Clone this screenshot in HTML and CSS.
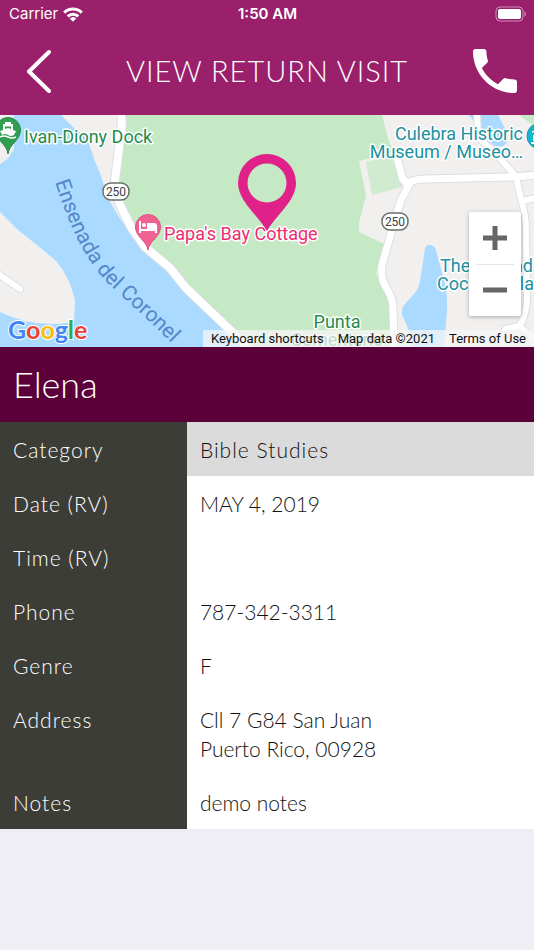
FILE: index.html
```html
<!DOCTYPE html>
<html lang="en">
<head>
<meta charset="utf-8">
<meta name="viewport" content="width=device-width, initial-scale=1">
<title>View Return Visit</title>
<link rel="stylesheet" href="styles.css">
</head>
<body>
<header class="top">
  <div class="status">
    <div class="carrier">
      <span>Carrier</span>
      <svg class="wifi" viewBox="0 0 20 15" aria-hidden="true">
        <g fill="none" stroke="#fff" stroke-width="3">
          <path d="M1.2 5.6a12.6 12.6 0 0 1 17.6 0"/>
          <path d="M4.7 9.3a7.6 7.6 0 0 1 10.6 0"/>
        </g>
        <path d="M10 14.8 6.7 11.6a4.8 4.8 0 0 1 6.6 0z" fill="#fff"/>
      </svg>
    </div>
    <time class="clock">1:50 AM</time>
    <div class="power">
      <svg class="battery" viewBox="0 0 32 16" aria-hidden="true">
        <rect x="2" y="1" width="27" height="14" rx="4" fill="none" stroke="#fff" stroke-opacity=".5"/>
        <rect x="4" y="3" width="23" height="10" rx="2" fill="#fff"/>
        <path d="M30.5 5.500v5q1.500-.6 1.500-2.500t-1.500-2.500z" fill="#fff" fill-opacity=".5"/>
      </svg>
    </div>
  </div>
  <nav class="bar">
    <button class="icon-button" type="button" aria-label="Back">
      <svg class="back-icon" viewBox="0 0 28 44" aria-hidden="true"><path d="M24 3 4 22.500 24 42" fill="none" stroke="#fff" stroke-width="4" stroke-linecap="round" stroke-linejoin="round"/></svg>
    </button>
    <h1 class="title">VIEW RETURN VISIT</h1>
    <button class="icon-button" type="button" aria-label="Call">
      <svg class="phone-icon" viewBox="3 3 18 18" aria-hidden="true"><path fill="#fff" d="M6.620 10.790c1.440 2.830 3.760 5.140 6.590 6.590l2.200-2.200c.27-.27.67-.36 1.020-.24 1.120.37 2.330.57 3.570.57.55 0 1 .45 1 1V20c0 .55-.45 1-1 1C10.610 21 3 13.390 3 4c0-.55.45-1 1-1h3.500c.55 0 1 .45 1 1 0 1.250.2 2.450.57 3.570.11.35.03.74-.25 1.020z"/></svg>
    </button>
  </nav>
</header>

<main>
  <section class="map" aria-label="Map">
    <svg class="map-canvas" viewBox="0 0 534 232" preserveAspectRatio="xMidYMid slice">
      <rect width="534" height="232" fill="#f1f0ef"/>
      <path fill="#aadaff" d="M0 0H61L75 14Q87 21 89 29Q94 45 101 61L109 85 119 102 140 132 170 157 205 194 247 232H0V197Q35 214 74 207L75 185Q70 163 57 147Q45 136 18 115L0 97V49L8 43 14 34V0Z"/>
      <path fill="#f1f0ef" d="M0 0H6L14 34 8 43 0 49Z"/>
      <path fill="#c5e8c5" d="M124 0H382L389 27 396 40 402 72 372 80 359 112V117L384 127 376 158 390 188V232H246L205 190 170 150 143 126 126 100 118 75Z"/>
      <path fill="#f1f0ef" d="M359 46 393 38 397 44 367 51 373 79 401 71 407 68 399 98 386 130 359 117V108L366 80Z"/>
      <path fill="#d0ebcf" d="M366 47 396 40 402 72 372 80Z"/>
      <path fill="#c5e8c5" d="M519 0H534V11Z"/>
      <path fill="#aadaff" d="M469 0H498L507 17Q509 29 503 31Q497 33 493 30L482 17Z"/>
      <path fill="#aadaff" d="M425 134Q426 129 430 130Q434 130 436 135L442 158Q448 175 447 195L444 232H412Q409 212 402 200Q401 194 404 190L414 179Q419 173 420 166Z"/>
      <g fill="none" stroke-linejoin="round">
        <g stroke="#dcdee3">
          <path stroke-width="10" d="M121 0Q123 9 120 25L115 65Q115 80 121 92L131 112 145 132 170 153 186 173 208 194 248 232"/>
          <path stroke-width="9" d="M396 38 402 62Q403 67 410 68L401 85 397 98 391 118 382 150Q380 164 387 174Q393 184 393 193L394 232M404 71Q412 64 424 64L514 62 536 60"/>
          <path stroke-width="8" d="M477 0 478 22 500 43 516 62 521 84Q527 102 526 125L527 185Q525 205 519 211L505 214M519 211 536 225M522 86 536 83M-2 159 20 174" stroke-linecap="round"/>
        </g>
        <g stroke="#fff">
          <path stroke-width="8" d="M121 0Q123 9 120 25L115 65Q115 80 121 92L131 112 145 132 170 153 186 173 208 194 248 232"/>
          <path stroke-width="7" d="M396 38 402 62Q403 67 410 68L401 85 397 98 391 118 382 150Q380 164 387 174Q393 184 393 193L394 232M404 71Q412 64 424 64L514 62 536 60"/>
          <path stroke-width="6" d="M477 0 478 22 500 43 516 62 521 84Q527 102 526 125L527 185Q525 205 519 211L505 214M519 211 536 225M522 86 536 83M-2 159 20 174" stroke-linecap="round"/>
        </g>
      </g>

      <g class="shield">
        <rect x="103" y="68" width="26" height="17" rx="8"/>
        <text x="116" y="81">250</text>
        <rect x="382" y="98" width="26" height="17" rx="8"/>
        <text x="395" y="111">250</text>
      </g>

      <path id="bay-line" fill="none" d="M55 67C68 105 82 145 115 175S157 213 184 241"/>
      <text class="bay"><textPath href="#bay-line">Ensenada del Coronel</textPath></text>

      <g transform="translate(8 15)">
        <path fill="#2f9e50" stroke="#258a43" d="M0 24C-1 14-12 11-12.500 0A12.500 12.500 0 0 1 12.500 0C12 11 1 14 0 24Z"/>
        <path fill="#fff" d="M-3-8H3V-6H5V0L8 1 6 5Q3 7 0 5Q-3 3-6 5L-8 1-5 0V-6H-3Z"/>
        <path fill="#2f9e50" d="M-3-3.500H3V-1L0-2-3-1Z"/>
        <path fill="none" stroke="#fff" stroke-width="1.500" d="M-8 7Q-4 5 0 7T8 7"/>
      </g>
      <g transform="translate(148 112)">
        <path fill="#f06292" stroke="#e24f82" d="M0 23C-1 14-12.500 10-12.500 0A12.500 12.500 0 0 1 12.500 0C12.500 10 1 14 0 23Z"/>
        <path fill="none" stroke="#fff" stroke-width="2" d="M-8-6V6M-8 3H8M8 6V-1"/>
        <circle cx="-4" cy="-2" r="2" fill="#fff"/>
        <path fill="#fff" d="M-1-4H6Q9-4 9-1V2H-1Z"/>
      </g>
      <g transform="translate(540 21)">
        <circle r="13" fill="#12b5cb" stroke="#0f9caf"/>
        <path fill="#fff" d="M-8-3 0-8V-5H-8ZM-7-1H-5V5H-7ZM-9 6H0V8H-9Z"/>
      </g>

      <g class="place">
        <text class="green" x="24" y="28">Ivan-Diony Dock</text>
        <text class="pink" x="164" y="125">Papa's Bay Cottage</text>
        <g class="teal">
          <text class="end" x="523" y="25">Culebra Historic</text>
          <text class="end" x="523" y="43">Museum / Museo…</text>
          <text x="440" y="157">The</text>
          <text class="end" x="533" y="157">nd</text>
          <text x="437" y="175">Coc</text>
          <text class="end" x="534" y="175">la</text>
        </g>
        <text class="green mid" x="337" y="213">Punta</text>
        <text class="green mid" x="337" y="231">Cementerio</text>
      </g>

      <text class="logo" x="8" y="224"><tspan fill="#4285f4">G</tspan><tspan fill="#ea4335">o</tspan><tspan fill="#fbbc05">o</tspan><tspan fill="#4285f4">g</tspan><tspan fill="#34a853">l</tspan><tspan fill="#ea4335">e</tspan></text>

      <path fill="#e0218a" fill-rule="evenodd" d="M267 116C258 100 238 86 238 68A29 29 0 0 1 296 68C296 86 276 100 267 116ZM267 48.500a19.500 19.500 0 1 0 0 39 19.500 19.500 0 0 0 0-39Z"/>
    </svg>
    <div class="zoom">
      <button type="button" aria-label="Zoom in"><svg viewBox="0 0 24 24" aria-hidden="true"><path d="M0 12H24M12 0V24"/></svg></button>
      <button type="button" aria-label="Zoom out"><svg viewBox="0 0 24 24" aria-hidden="true"><path d="M0 12H24"/></svg></button>
    </div>
    <div class="credits">
      <button type="button">Keyboard shortcuts</button>
      <span>Map data ©2021</span>
      <a href="#terms">Terms of Use</a>
    </div>
  </section>

  <h2 class="name">Elena</h2>

  <table class="details">
    <tr class="category"><th scope="row">Category</th><td>Bible Studies</td></tr>
    <tr><th scope="row">Date (RV)</th><td>MAY 4, 2019</td></tr>
    <tr><th scope="row">Time (RV)</th><td></td></tr>
    <tr><th scope="row">Phone</th><td>787-342-3311</td></tr>
    <tr><th scope="row">Genre</th><td>F</td></tr>
    <tr><th scope="row">Address</th><td>Cll 7 G84 San Juan<br>Puerto Rico, 00928</td></tr>
    <tr><th scope="row">Notes</th><td>demo notes</td></tr>
  </table>
</main>
</body>
</html>
```
FILE: styles.css
```css
* {
  box-sizing: border-box;
}

body {
  margin: 0;
  background: #efeef4;
  color: #111;
  font-family: Lato, sans-serif;
  font-weight: 300;
}

button {
  margin: 0;
  padding: 0;
  border: 0;
  background: none;
  color: inherit;
  font: inherit;
  cursor: pointer;
}

svg {
  display: block;
}

/* Header */
.top {
  background: #9a206c;
  color: #fff;
}

.status {
  display: grid;
  grid-template-columns: 1fr auto 1fr;
  align-items: center;
  height: 28px;
  padding: 0 8px 0 9px;
  font: 400 15px/20px Inter, sans-serif;
}

.carrier {
  display: flex;
  align-items: center;
  gap: 5px;
}

.wifi {
  width: 20px;
  height: 15px;
}

.clock {
  font-weight: 600;
}

.power {
  display: flex;
  justify-content: flex-end;
}

.battery {
  width: 32px;
  height: 16px;
}

.bar {
  display: flex;
  align-items: center;
  justify-content: space-between;
  height: 87px;
  padding: 0 17px 1px;
}

.icon-button {
  display: flex;
  justify-content: center;
  width: 44px;
  height: 44px;
}

.back-icon {
  width: 28px;
  height: 44px;
}

.phone-icon {
  width: 44px;
  height: 44px;
}

.title {
  margin: 0;
  font-size: 29px;
  font-weight: 300;
  line-height: 36px;
  letter-spacing: 1px;
}

/* Map */
.map {
  position: relative;
  font-family: Roboto, sans-serif;
  font-weight: 400;
}

.map-canvas {
  width: 100%;
  height: 232px;
}

.shield rect {
  fill: #fff;
  stroke: #667069;
  stroke-width: 1.5px;
}

.shield text {
  fill: #3c4043;
  font-size: 12px;
  text-anchor: middle;
}

.bay {
  fill: #5387c9;
  font-size: 21px;
}

.place {
  font-size: 18px;
  stroke: #fff;
  stroke-width: 3px;
  stroke-linejoin: round;
  paint-order: stroke;
}

.green {
  fill: #238b4d;
}

.pink {
  fill: #ef2b70;
}

.teal {
  fill: #1c91a0;
}

.end {
  text-anchor: end;
}

.mid {
  text-anchor: middle;
}

.logo {
  font-family: Lato, sans-serif;
  font-size: 25px;
  font-weight: 700;
  stroke: #fff;
  stroke-width: 2px;
  paint-order: stroke;
}

.zoom {
  position: absolute;
  top: 97px;
  right: 13px;
  width: 52px;
  background: #fff;
  border-radius: 2px;
  box-shadow: 0 1px 4px rgb(0 0 0 / 30%);
}

.zoom button {
  display: flex;
  align-items: center;
  justify-content: center;
  width: 100%;
  height: 52px;
}

.zoom button + button::before {
  content: "";
  position: absolute;
  left: 7px;
  right: 7px;
  top: 52px;
  height: 1px;
  background: #e6e6e6;
}

.zoom svg {
  width: 24px;
  height: 24px;
  stroke: #666;
  stroke-width: 5px;
}

.credits {
  position: absolute;
  right: 0;
  bottom: 0;
  display: flex;
  gap: 14px;
  padding: 0 8px;
  background: rgb(245 245 245 / 75%);
  color: #111;
  font-size: 13px;
  line-height: 17px;
}

.credits a {
  color: inherit;
  text-decoration: none;
}

/* Visit */
.name {
  margin: 0;
  padding: 15px 13px 16px;
  background: #5b0038;
  color: #fff;
  font-size: 36px;
  font-weight: 300;
  line-height: 44px;
}

.details {
  width: 100%;
  border-collapse: collapse;
  background: #fff;
  font-size: 21px;
  line-height: 29px;
}

.details th,
.details td {
  padding: 13px 13px 12px;
  text-align: left;
  vertical-align: top;
  font-weight: 300;
}

.details th {
  width: 35%;
  background: #3d3d38;
  color: #fff;
  letter-spacing: 1px;
}

.category td {
  background: #dbdbdb;
  letter-spacing: 1px;
}
```
